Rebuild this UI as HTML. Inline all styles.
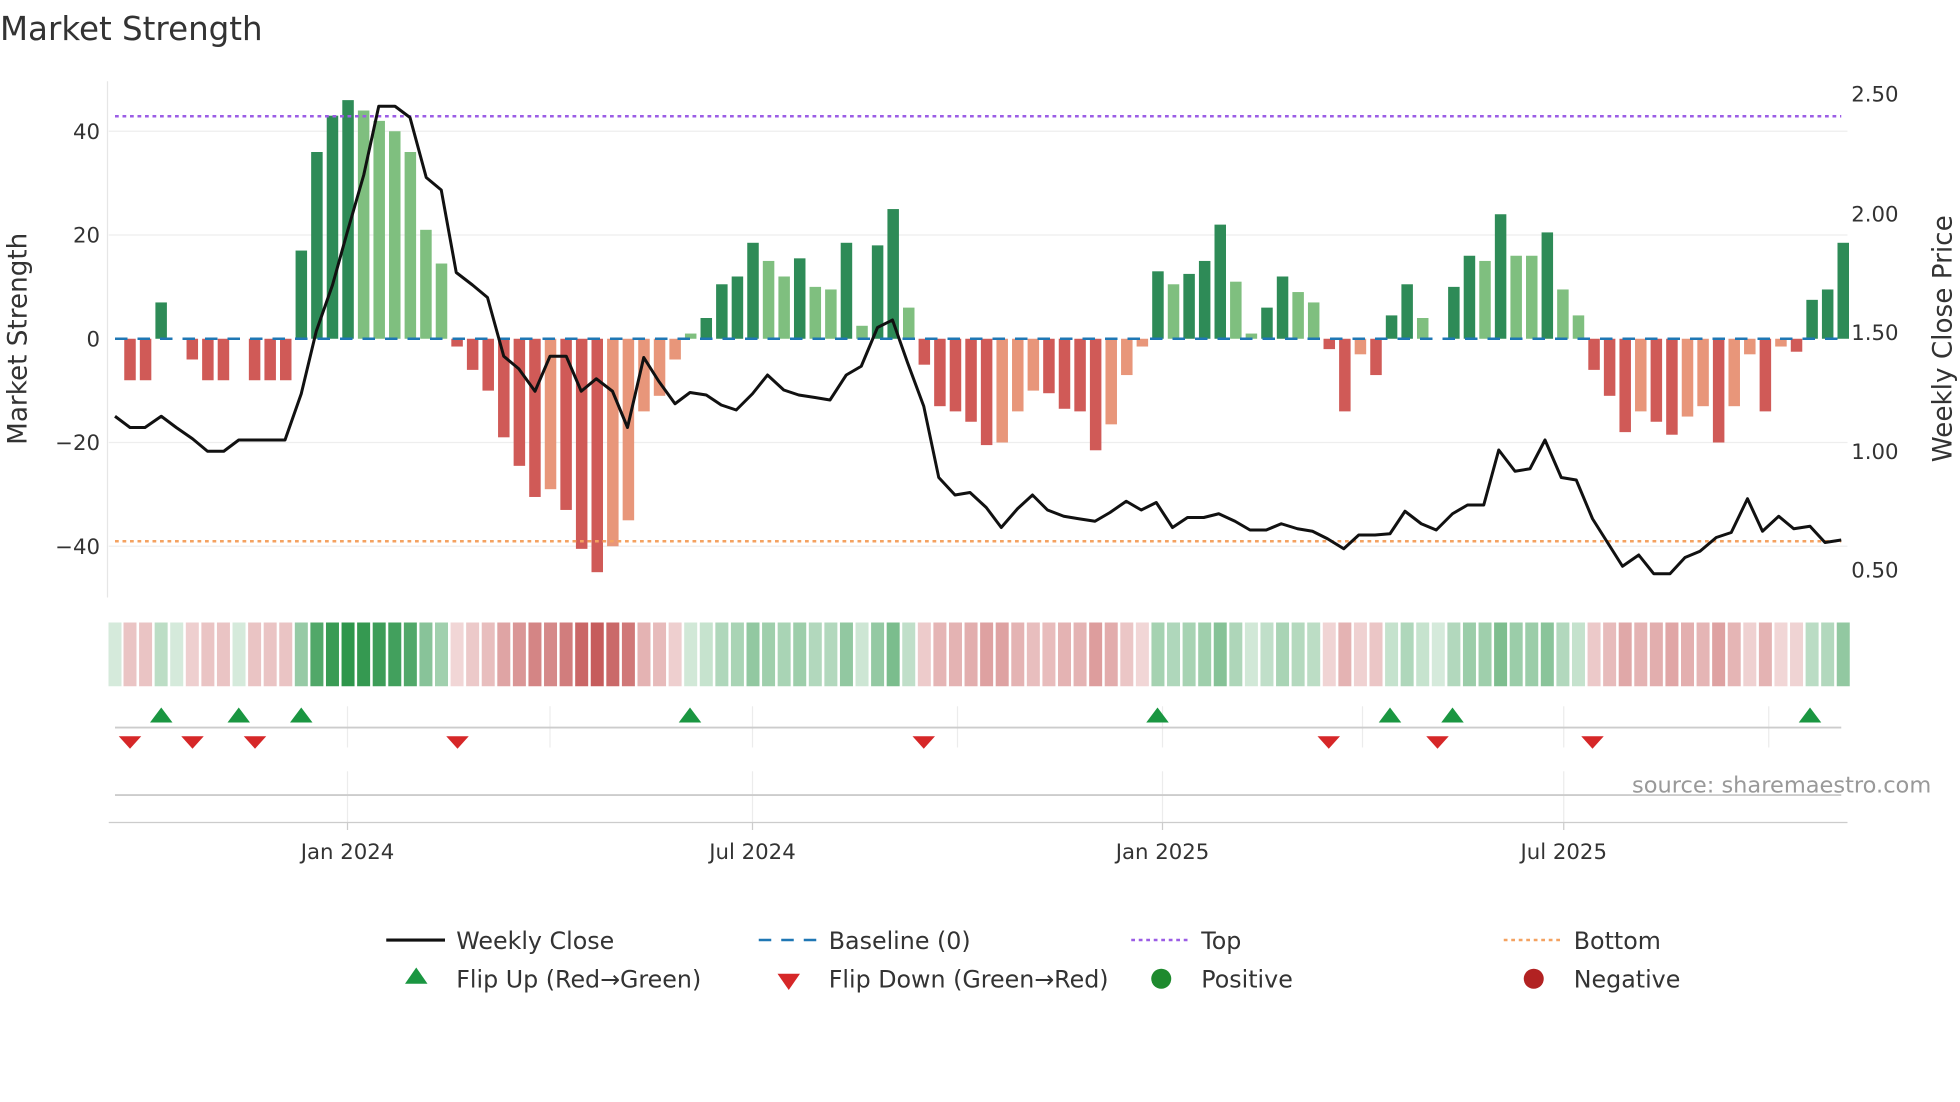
<!DOCTYPE html>
<html><head><meta charset="utf-8">
<style>
html,body{margin:0;padding:0;background:#fff;width:1960px;height:1102px;overflow:hidden}
svg{display:block}
text{font-family:"DejaVu Sans","Liberation Sans",sans-serif;fill:#333}
</style></head><body>
<svg id="s" width="1960" height="1102" viewBox="0 0 1568 881.6" xmlns="http://www.w3.org/2000/svg">
<rect width="1568" height="882" fill="#fff"/>
<text x="0" y="32" font-size="26" fill="#333">Market Strength</text>
<g stroke="#eeeeee" stroke-width="1">
<line x1="87" y1="105" x2="1478" y2="105"/><line x1="87" y1="188" x2="1478" y2="188"/>
<line x1="87" y1="354" x2="1478" y2="354"/><line x1="87" y1="437" x2="1478" y2="437"/>
</g>
<line x1="86" y1="65" x2="86" y2="478" stroke="#e6e6e6"/>
<g id="bars"></g>
<line x1="92" y1="271" x2="1473" y2="271" stroke="#1f77b4" stroke-width="2" stroke-dasharray="10,8"/>
<line x1="92" y1="93" x2="1473" y2="93" stroke="#9b5de5" stroke-width="2" stroke-dasharray="3,3"/>
<line x1="92" y1="433" x2="1473" y2="433" stroke="#f4a261" stroke-width="2" stroke-dasharray="3,3"/>
<polyline id="price" fill="none" stroke="#111" stroke-width="2.4" stroke-linejoin="round"/>
<g font-size="17" text-anchor="end">
<text x="80" y="111">40</text><text x="80" y="194">20</text><text x="80" y="277">0</text>
<text x="80" y="360">−20</text><text x="80" y="443">−40</text>
</g>
<g font-size="17">
<text x="1481" y="81">2.50</text><text x="1481" y="177">2.00</text><text x="1481" y="272">1.50</text>
<text x="1481" y="367">1.00</text><text x="1481" y="462">0.50</text>
</g>
<text transform="translate(21,271) rotate(-90)" font-size="21" text-anchor="middle">Market Strength</text>
<text transform="translate(1561,271) rotate(-90)" font-size="21" text-anchor="middle">Weekly Close Price</text>
<g id="strip"></g>
<g stroke="#ececec"><line x1="278" y1="565" x2="278" y2="598"/><line x1="440" y1="565" x2="440" y2="598"/><line x1="602" y1="565" x2="602" y2="598"/><line x1="766" y1="565" x2="766" y2="598"/><line x1="930" y1="565" x2="930" y2="598"/><line x1="1090" y1="565" x2="1090" y2="598"/><line x1="1251" y1="565" x2="1251" y2="598"/><line x1="1415" y1="565" x2="1415" y2="598"/>
<line x1="278" y1="617" x2="278" y2="658"/><line x1="602" y1="617" x2="602" y2="658"/><line x1="930" y1="617" x2="930" y2="658"/><line x1="1251" y1="617" x2="1251" y2="658"/></g>
<line x1="92" y1="582" x2="1473" y2="582" stroke="#cccccc" stroke-width="1.5"/>
<line x1="92" y1="636" x2="1473" y2="636" stroke="#cccccc" stroke-width="1.5"/>
<line x1="87" y1="658" x2="1478" y2="658" stroke="#cccccc" stroke-width="1"/>
<g id="flips"></g>
<text x="1545" y="634" font-size="18" fill="#999" text-anchor="end" style="fill:#999">source: sharemaestro.com</text>
<g stroke="#ccc"><line x1="278" y1="658" x2="278" y2="664"/><line x1="602" y1="658" x2="602" y2="664"/><line x1="930" y1="658" x2="930" y2="664"/><line x1="1251" y1="658" x2="1251" y2="664"/></g>
<g font-size="17" text-anchor="middle">
<text x="278" y="687">Jan 2024</text><text x="602" y="687">Jul 2024</text><text x="930" y="687">Jan 2025</text><text x="1251" y="687">Jul 2025</text>
</g>
<g font-size="19">
<line x1="309" y1="752" x2="356" y2="752" stroke="#111" stroke-width="2.5"/><text x="365" y="759">Weekly Close</text>
<line x1="607" y1="752" x2="654" y2="752" stroke="#1f77b4" stroke-width="2" stroke-dasharray="10,8"/><text x="663" y="759">Baseline (0)</text>
<line x1="905" y1="752" x2="952" y2="752" stroke="#9b5de5" stroke-width="2" stroke-dasharray="3,3"/><text x="961" y="759">Top</text>
<line x1="1203" y1="752" x2="1250" y2="752" stroke="#f4a261" stroke-width="2" stroke-dasharray="3,3"/><text x="1259" y="759">Bottom</text>
<polygon points="333,774 324,787 342,787" fill="#1a9641"/><text x="365" y="790">Flip Up (Red→Green)</text>
<polygon points="622,779 640,779 631,792" fill="#d62728"/><text x="663" y="790">Flip Down (Green→Red)</text>
<circle cx="929" cy="783" r="8" fill="#1e8a2e"/><text x="961" y="790">Positive</text>
<circle cx="1227" cy="783" r="8" fill="#b22222"/><text x="1259" y="790">Negative</text>
</g>
</svg>
<script>
var v=[[-8,'r'],[-8,'r'],[7,'g'],[0,'r'],[-4,'r'],[-8,'r'],[-8,'r'],[0,'r'],[-8,'r'],[-8,'r'],[-8,'r'],[17,'g'],[36,'g'],[43,'g'],[46,'g'],[44,'l'],[42,'l'],[40,'l'],[36,'l'],[21,'l'],[14.5,'l'],[-1.5,'r'],[-6,'r'],[-10,'r'],[-19,'r'],[-24.5,'r'],[-30.5,'r'],[-29,'s'],[-33,'r'],[-40.5,'r'],[-45,'r'],[-40,'s'],[-35,'s'],[-14,'s'],[-11,'s'],[-4,'s'],[1,'l'],[4,'g'],[10.5,'g'],[12,'g'],[18.5,'g'],[15,'l'],[12,'l'],[15.5,'g'],[10,'l'],[9.5,'l'],[18.5,'g'],[2.5,'l'],[18,'g'],[25,'g'],[6,'l'],[-5,'r'],[-13,'r'],[-14,'r'],[-16,'r'],[-20.5,'r'],[-20,'s'],[-14,'s'],[-10,'s'],[-10.5,'r'],[-13.5,'r'],[-14,'r'],[-21.5,'r'],[-16.5,'s'],[-7,'s'],[-1.5,'s'],[13,'g'],[10.5,'l'],[12.5,'g'],[15,'g'],[22,'g'],[11,'l'],[1,'l'],[6,'g'],[12,'g'],[9,'l'],[7,'l'],[-2,'r'],[-14,'r'],[-3,'s'],[-7,'r'],[4.5,'g'],[10.5,'g'],[4,'l'],[0,'g'],[10,'g'],[16,'g'],[15,'l'],[24,'g'],[16,'l'],[16,'l'],[20.5,'g'],[9.5,'l'],[4.5,'l'],[-6,'r'],[-11,'r'],[-18,'r'],[-14,'s'],[-16,'r'],[-18.5,'r'],[-15,'s'],[-13,'s'],[-20,'r'],[-13,'s'],[-3,'s'],[-14,'r'],[-1.5,'s'],[-2.5,'r'],[7.5,'g'],[9.5,'g'],[18.5,'g']];
var col={g:'#2e8b57',l:'#7fbf7f',r:'#d05a57',s:'#e8967a'};
var NS='http://www.w3.org/2000/svg',b=document.getElementById('bars'),st=document.getElementById('strip');
function el(p,t,a){var e=document.createElementNS(NS,t);for(var k in a)e.setAttribute(k,a[k]);p.appendChild(e);return e;}
var dx=12.46,x0=104;
function cell(x,val){var m=Math.min(Math.abs(val)/46,1),c;
 if(val>=0){c='rgba(46,150,75,'+(0.2+0.8*m).toFixed(2)+')';}else{c='rgba(190,70,70,'+(0.2+0.7*m).toFixed(2)+')';}
 el(st,'rect',{x:x-5.2,y:498,width:10.4,height:51,fill:c});}
cell(92,0);
v.forEach(function(d,i){var x=x0+dx*i,y0=271,h=d[0]*4.15;
 if(d[0]!=0)el(b,'rect',{x:x-4.6,y:h>0?y0-h:y0,width:9.2,height:Math.abs(h),fill:col[d[1]]});
 cell(x,d[0]);
});
var p=[[92,333],[104,342],[116,342],[129,333],[141,342],[154,351],[166,361],[179,361],[191,352],[204,352],[216,352],[228,352],[241,315],[253,265],[266,228],[278,185],[291,140],[303,85],[316,85],[328,94],[341,142],[353,152],[365,218],[378,228],[390,238],[403,285],[415,295],[428,313],[440,285],[453,285],[465,313],[477,303],[490,313],[502,342],[515,286],[527,305],[540,323],[552,314],[565,316],[577,324],[589,328],[602,315],[614,300],[627,312],[639,316],[652,318],[664,320],[677,300],[689,293],[702,262],[714,256],[726,290],[739,325],[751,382],[764,396],[776,394],[789,406],[801,422],[814,407],[826,396],[838,408],[851,413],[863,415],[876,417],[888,410],[901,401],[913,408],[925,402],[938,422],[950,414],[963,414],[975,411],[988,417],[1000,424],[1013,424],[1025,419],[1038,423],[1050,425],[1062,431],[1075,439],[1087,428],[1100,428],[1112,427],[1124,409],[1137,419],[1149,424],[1162,411],[1174,404],[1187,404],[1199,360],[1212,377],[1224,375],[1236,352],[1249,382],[1261,384],[1274,415],[1286,434],[1298,453],[1311,444],[1323,459],[1336,459],[1348,446],[1360,441],[1373,430],[1385,426],[1398,399],[1410,425],[1423,413],[1435,423],[1448,421],[1460,434],[1473,432]];
document.getElementById('price').setAttribute('points',p.map(function(q){return q.join(',')}).join(' '));
var f=document.getElementById('flips');
[129,191,241,552,926,1112,1162,1448].forEach(function(x){el(f,'polygon',{points:(x)+',566 '+(x-9)+',578 '+(x+9)+',578',fill:'#1a9641'});});
[104,154,204,366,739,1063,1150,1274].forEach(function(x){el(f,'polygon',{points:(x-9)+',589 '+(x+9)+',589 '+x+',599',fill:'#d62728'});});
</script>
</body></html>
